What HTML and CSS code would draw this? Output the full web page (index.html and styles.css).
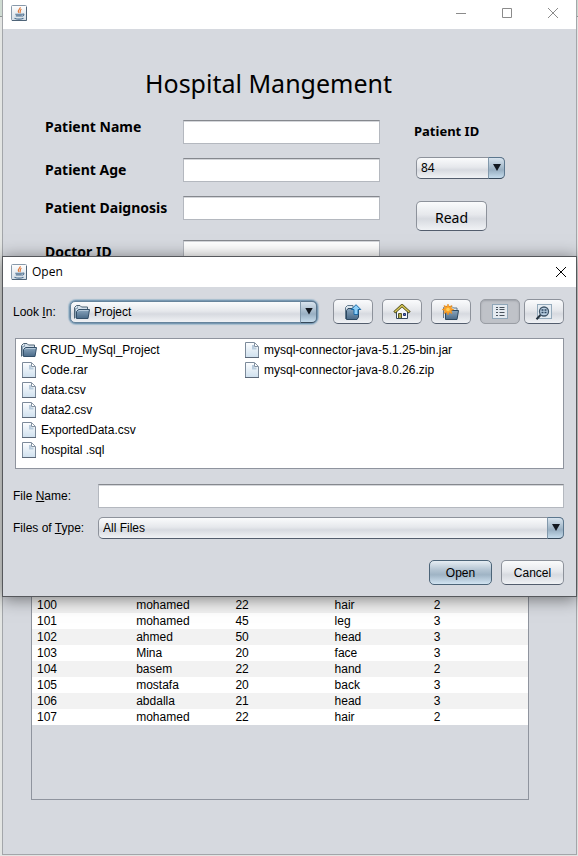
FILE: index.html
```html
<!DOCTYPE html>
<html lang="en">
<head>
<meta charset="utf-8">
<title>Hospital Mangement</title>
<link rel="stylesheet" href="styles.css">
</head>
<body>
<svg class="defs" aria-hidden="true">
  <defs>
    <linearGradient id="g-folder" x1="0" y1="0" x2="0" y2="1"><stop offset="0" stop-color="#8aa6be"/><stop offset="1" stop-color="#4a6a88"/></linearGradient>
    <linearGradient id="g-page" x1="0" y1="0" x2="0" y2="1"><stop offset="0" stop-color="#fdfeff"/><stop offset="1" stop-color="#cfe0ee"/></linearGradient>
    <linearGradient id="g-java" x1="0" y1="0" x2="0" y2="1"><stop offset="0" stop-color="#ffffff"/><stop offset="1" stop-color="#d3dde6"/></linearGradient>
    <symbol id="i-java" viewBox="0 0 16 16">
      <rect x=".5" y=".5" width="15" height="15" rx="1" fill="url(#g-java)" stroke="#8799aa"/>
      <path d="M1 15.5h14.5V2" fill="none" stroke="#4f6478"/>
      <path d="M9.200 2.200C9.800 4 6 4.600 7.600 7.800M10.500 4.300C8.200 5.200 10 6.500 8.800 8.200" fill="none" stroke="#e0783a" stroke-width="1.200"/>
      <path d="M4.300 9.200h7M4.800 10.900h6M3.500 13.200c2.500 1 6.500 1 9 0M11.300 9.200c2.200-.9 2.200 1.600-.4 2" fill="none" stroke="#4d7090" stroke-width="1.100"/>
    </symbol>
    <symbol id="i-folder" viewBox="0 0 16 16">
      <path d="M.5 14.500V3.500L2.500 1.500H6l1.500 1.500H13.500V6" fill="#d4e0ea" stroke="#4d6274"/>
      <path d="M1.500 14V4.500h2V2.500" fill="none" stroke="#8ca2b4"/>
      <path d="M2.500 14.500V7.500L4.500 5.500H15.500L14 14.500Z" fill="url(#g-folder)" stroke="#34506a"/>
      <path d="M4 7.500L5 6.500H14.500" fill="none" stroke="#b5c9da"/>
    </symbol>
    <symbol id="i-file" viewBox="0 0 16 16">
      <path d="M1.500 .5H10.500L14.500 4.500V15.500H1.500Z" fill="url(#g-page)" stroke="#7c8a9a"/>
      <path d="M1 15.500H15" stroke="#5c6878"/>
      <path d="M10.500 1V4.500H14" fill="#fff" stroke="#8492a2"/>
      <path d="M9 3V6.500H12.500" fill="none" stroke="#b8cbdc" stroke-width="2"/>
    </symbol>
    <symbol id="i-up" viewBox="0 0 18 16">
      <path d="M1.500 15V3.500L3.500 1.500H9V4" fill="#dbe5ed" stroke="#60788c"/>
      <path d="M2.500 15.500V6.500L4 4.500H14.500V13L13 15.500Z" fill="url(#g-folder)" stroke="#2d4860"/>
      <path d="M12 .7L16.800 5.500H14V10.500H10V5.500H7.200Z" fill="#8fd0f8" stroke="#1c6aa6"/>
    </symbol>
    <symbol id="i-home" viewBox="0 0 18 16">
      <path d="M3.500 7V14.500H14.500V7L9 2Z" fill="#f8f9fb" stroke="#34485c"/>
      <path d="M1.300 8.500L9 1.500L16.700 8.500" fill="none" stroke="#4d4a18" stroke-width="3"/>
      <path d="M1.800 8L9 1.500L16.200 8" fill="none" stroke="#d9c858" stroke-width="1.400"/>
      <path d="M5.500 14V9.500H8.500V14" fill="#b4ae52" stroke="#5b5824"/>
      <path d="M10.500 9.500h2v2h-2z" fill="#5267c0" stroke="#26366c"/>
    </symbol>
    <symbol id="i-new" viewBox="0 0 18 16">
      <path d="M1.500 14V3.500L3 2.500H10L11.500 4H15V7" fill="#dbe5ed" stroke="#60788c"/>
      <path d="M3.500 15.500V8.500L5 6.500H16.500L15 15.500Z" fill="url(#g-folder)" stroke="#2d4860"/>
      <path d="M6 0L7.200 2.700L10 1.500L9 4.300L11.800 5.500L9 6.700L10 9.500L7.200 8.300L6 11L4.800 8.300L2 9.500L3 6.700L.2 5.500L3 4.300L2 1.500L4.800 2.700Z" fill="#ffa326" stroke="#e88a18" stroke-width=".6"/>
      <circle cx="6" cy="5.500" r="1.800" fill="#ffd15c"/>
    </symbol>
    <symbol id="i-list" viewBox="0 0 18 16">
      <rect x="1.500" y=".5" width="15" height="14" fill="#e4eaf0" stroke="#8fa6b8"/>
      <path d="M5 3.500h2M5 5.500h2M5 8.500h2M5 11.500h2M8.500 3.500h5M8.500 5.500h5M8.500 8.500h5M8.500 11.500h5" stroke="#4a545e"/>
    </symbol>
    <symbol id="i-details" viewBox="0 0 18 16">
      <rect x="2.500" y=".5" width="14" height="14" fill="#e4ebf1" stroke="#94aabb"/>
      <path d="M5.500 11L1.500 15.200" stroke="#26323e" stroke-width="2"/>
      <circle cx="9" cy="7.500" r="4.500" fill="#b9cee0" stroke="#3e5468" stroke-width="1.300"/>
      <path d="M6.500 6h2M9.500 6h2M6.500 8.500h2M9.500 8.500h2" stroke="#2d4660" stroke-width="1.300"/>
    </symbol>
  </defs>
</svg>

<div class="desktop">
  <main class="window">
    <header class="titlebar">
      <svg class="icon"><use href="#i-java"/></svg>
      <div class="controls">
        <button aria-label="Minimize"><svg viewBox="0 0 12 12"><path d="M1 6.500h10"/></svg></button>
        <button aria-label="Maximize"><svg viewBox="0 0 12 12"><path d="M1.500 1.500h9v9h-9z"/></svg></button>
        <button aria-label="Close"><svg viewBox="0 0 12 12"><path d="M1 1l10 10M11 1L1 11"/></svg></button>
      </div>
    </header>

    <h1>Hospital Mangement</h1>

    <div class="record">
      <form class="fields">
        <label class="top" for="name">Patient Name</label><input id="name" type="text">
        <label for="age">Patient Age</label><input id="age" type="text">
        <label for="diagnosis">Patient Daignosis</label><input id="diagnosis" type="text">
        <label class="last" for="doctor">Doctor ID</label><input class="last" id="doctor" type="text">
      </form>
      <div class="lookup">
        <label for="pid">Patient ID</label>
        <div class="combo small"><select id="pid"><option>84</option></select></div>
        <button class="btn read">Read</button>
      </div>
    </div>

    <div class="pane">
      <table>
        <tbody>
          <tr><td>100</td><td>mohamed</td><td>22</td><td>hair</td><td>2</td></tr>
          <tr><td>101</td><td>mohamed</td><td>45</td><td>leg</td><td>3</td></tr>
          <tr><td>102</td><td>ahmed</td><td>50</td><td>head</td><td>3</td></tr>
          <tr><td>103</td><td>Mina</td><td>20</td><td>face</td><td>3</td></tr>
          <tr><td>104</td><td>basem</td><td>22</td><td>hand</td><td>2</td></tr>
          <tr><td>105</td><td>mostafa</td><td>20</td><td>back</td><td>3</td></tr>
          <tr><td>106</td><td>abdalla</td><td>21</td><td>head</td><td>3</td></tr>
          <tr><td>107</td><td>mohamed</td><td>22</td><td>hair</td><td>2</td></tr>
        </tbody>
      </table>
    </div>
  </main>

  <section class="chooser" role="dialog" aria-labelledby="chooser-title">
    <header class="titlebar">
      <svg class="icon"><use href="#i-java"/></svg>
      <span id="chooser-title">Open</span>
      <div class="controls">
        <button aria-label="Close"><svg viewBox="0 0 12 12"><path d="M1 1l10 10M11 1L1 11"/></svg></button>
      </div>
    </header>
    <div class="body">
      <div class="toolbar">
        <label for="lookin">Look <u>I</u>n:</label>
        <div class="combo focused">
          <svg class="icon"><use href="#i-folder"/></svg>
          <select id="lookin"><option>Project</option></select>
        </div>
        <div class="nav">
          <button class="btn" aria-label="Up One Level"><svg><use href="#i-up"/></svg></button>
          <button class="btn" aria-label="Home"><svg><use href="#i-home"/></svg></button>
          <button class="btn" aria-label="Create New Folder"><svg><use href="#i-new"/></svg></button>
          <div class="views">
            <button class="btn pressed" aria-label="List" aria-pressed="true"><svg><use href="#i-list"/></svg></button>
            <button class="btn" aria-label="Details"><svg><use href="#i-details"/></svg></button>
          </div>
        </div>
      </div>

      <ul class="files">
        <li><svg class="icon"><use href="#i-folder"/></svg>CRUD_MySql_Project</li>
        <li><svg class="icon"><use href="#i-file"/></svg>Code.rar</li>
        <li><svg class="icon"><use href="#i-file"/></svg>data.csv</li>
        <li><svg class="icon"><use href="#i-file"/></svg>data2.csv</li>
        <li><svg class="icon"><use href="#i-file"/></svg>ExportedData.csv</li>
        <li><svg class="icon"><use href="#i-file"/></svg>hospital .sql</li>
        <li><svg class="icon"><use href="#i-file"/></svg>mysql-connector-java-5.1.25-bin.jar</li>
        <li><svg class="icon"><use href="#i-file"/></svg>mysql-connector-java-8.0.26.zip</li>
      </ul>

      <div class="target">
        <label for="filename">File <u>N</u>ame:</label>
        <input id="filename" type="text">
        <label for="filetype">Files of <u>T</u>ype:</label>
        <div class="combo"><select id="filetype"><option>All Files</option></select></div>
      </div>

      <div class="actions">
        <button class="btn default">Open</button>
        <button class="btn">Cancel</button>
      </div>
    </div>
  </section>
</div>
</body>
</html>
```

FILE: styles.css
```css
*, ::before, ::after { box-sizing: border-box; }

body {
  margin: 0;
  color: #000;
  font: 12px/16px "Liberation Sans", Arial, sans-serif;
}

button, input, select { font: inherit; color: inherit; margin: 0; }
svg { display: block; }
.defs { position: absolute; width: 0; height: 0; }
.icon { width: 16px; height: 16px; flex: none; }

.desktop {
  position: relative;
  display: flex;
  min-height: 100vh;
  padding: 0 1px 1px 2px;
  background: linear-gradient(#cfdbd2 16px, #8f9693 16px, #8f9693 17px, #e3e5e3 17px);
}

/* Window frame */
.window {
  flex: 1;
  display: flex;
  flex-direction: column;
  border: 1px solid #a3a6aa;
  border-top: 0;
  background: #d6d9df;
}

.titlebar {
  display: flex;
  align-items: center;
  gap: 5px;
  height: 29px;
  padding: 0 8px;
  background: #fff;
  font-family: "Open Sans", sans-serif;
}
.window > .titlebar { padding-bottom: 3px; }
.controls { display: flex; gap: 34px; margin-left: auto; padding-right: 9px; }
.controls button { padding: 0; border: 0; background: none; }
.controls svg { width: 12px; height: 12px; fill: none; stroke: #8b8b8b; }

h1 {
  margin: 36px 0 0;
  padding-right: 42px;
  font: 25px/36px "Noto Sans", sans-serif;
  text-align: center;
}

/* Patient record */
.record {
  display: flex;
  gap: 34px;
  margin-top: 19px;
  padding: 0 71px 0 42px;
  font-family: "Noto Sans", sans-serif;
}
.fields {
  flex: 1;
  display: grid;
  grid-template-columns: 138px 1fr;
  row-gap: 14px;
  align-items: center;
  font-size: 14px;
}
.fields label { font-weight: bold; line-height: 16px; }
.fields .top { align-self: start; line-height: 14px; }
.fields .last { margin-top: 6px; }

input {
  width: 100%;
  min-width: 0;
  height: 24px;
  padding: 0 6px;
  border: 1px solid #b4b8bf;
  border-top-color: #85888e;
  background: #fff;
  box-shadow: inset 0 1px 0 #d4d6da;
}

.lookup { display: flex; flex-direction: column; align-items: flex-start; width: 91px; }
.lookup label { margin: 3px 0 18px; font-size: 13px; font-weight: bold; }
.lookup .combo { width: 89px; }
.lookup .combo, .lookup .btn { margin-left: 2px; }
.btn.read { width: 71px; height: 30px; margin-top: 22px; padding-top: 3px; font-size: 14px; }

/* Buttons and combo boxes */
.btn, .combo select {
  border: 1px solid #8d929b;
  border-bottom-color: #535d6d;
  border-radius: 5px;
  background: linear-gradient(#fafbfc, #e6e8ec 45%, #d7dae0 60%, #f0f2f5);
}
.btn {
  display: flex;
  align-items: center;
  justify-content: center;
  height: 25px;
  padding: 0;
}
.btn svg { width: 18px; height: 16px; }
.btn.default {
  border-color: #4c6478;
  background: linear-gradient(#e6edf3, #b2c3d1 40%, #9fb4c5 60%, #d2e4f2);
}
.btn.pressed {
  border-color: #999da4;
  background: #bfc2c8;
  box-shadow: inset 0 1px 2px #9da0a7;
}

.combo { position: relative; }
.combo select {
  display: block;
  appearance: none;
  width: 100%;
  height: 22px;
  padding: 0 20px 0 4px;
}
.combo::before {
  content: "";
  position: absolute;
  top: 0;
  right: 0;
  width: 17px;
  height: 100%;
  border: 1px solid #5c778e;
  border-left-color: #8299ac;
  border-bottom-color: #35485a;
  border-radius: 0 5px 5px 0;
  background: linear-gradient(#d8e4ee, #a8bccd 45%, #98afc2 60%, #c6dcec);
  pointer-events: none;
}
.combo::after {
  content: "";
  position: absolute;
  top: calc(50% - 4px);
  right: 4px;
  width: 8px;
  height: 7px;
  background: #121820;
  clip-path: polygon(0 0, 100% 0, 50% 100%);
  pointer-events: none;
}
.focused { border-radius: 6px; box-shadow: 0 0 0 1px #7898b2, 0 0 1px 2px #a5bccd; }
.focused .icon { position: absolute; left: 4px; top: 3px; pointer-events: none; }
.combo.focused select { padding-left: 23px; border-color: #66849c; }

/* Records table */
.pane {
  flex: 1;
  margin: 332px 47px 54px 28px;
  border: 1px solid #8f949e;
}
table { width: 100%; table-layout: fixed; border-collapse: collapse; background: #fff; }
td { height: 16px; padding: 0 5px; line-height: 16px; }
tr:nth-child(odd) { background: #f2f2f2; }

/* File chooser */
.chooser {
  position: absolute;
  top: 256px;
  left: 2px;
  right: 1px;
  border: 1px solid #56585c;
  background: #d6d9df;
  box-shadow: 0 2px 16px rgba(0, 0, 0, .5);
}
.chooser .titlebar { height: 30px; }
.chooser .controls { padding-right: 1px; }
.chooser .controls svg { stroke: #000; }
.chooser .body { padding: 12px 12px 11px; }

.toolbar { display: flex; align-items: center; }
.toolbar > label, .target label { margin-left: -2px; }
.toolbar > label { width: 57px; }
.toolbar .combo { flex: 1; }
.nav { display: flex; gap: 9px; margin-left: 16px; }
.nav .btn { width: 40px; }
.views { display: flex; gap: 4px; }

.files {
  display: grid;
  grid-template: repeat(6, 20px) / 223px 1fr;
  grid-auto-flow: column;
  height: 131px;
  margin: 14px 0 0;
  padding: 1px 5px;
  border: 1px solid #8f949e;
  background: #fff;
  list-style: none;
}
.files li { display: flex; align-items: center; gap: 4px; white-space: nowrap; }

.target {
  display: grid;
  grid-template-columns: 83px 1fr;
  row-gap: 9px;
  align-items: center;
  margin-top: 15px;
}
.actions { display: flex; justify-content: flex-end; gap: 9px; margin-top: 21px; }
.actions .btn { width: 63px; }
```
